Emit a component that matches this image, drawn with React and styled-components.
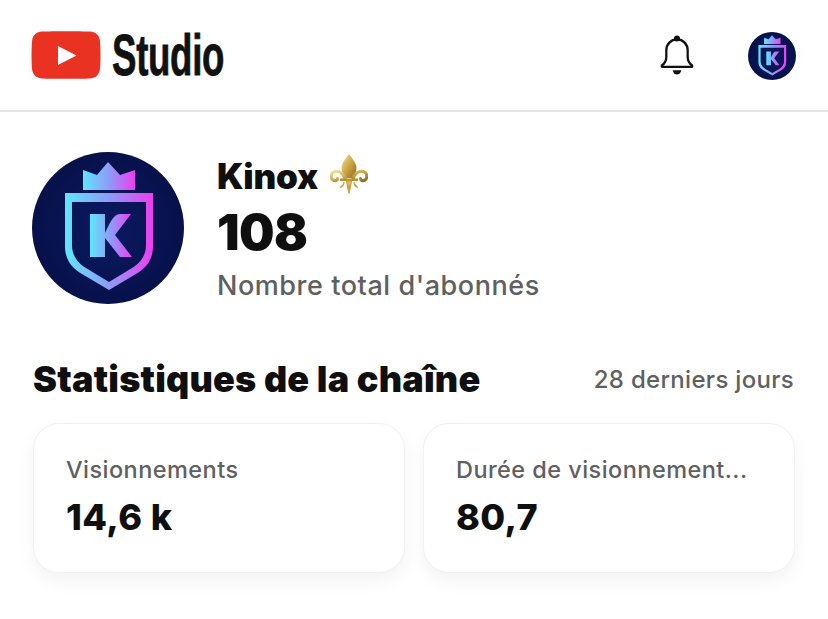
import React from 'react';
import styled, { createGlobalStyle } from 'styled-components';

const GlobalStyle = createGlobalStyle`
  html, body {
    margin: 0;
    padding: 0;
    background: #fff;
    font-family: Inter, "Liberation Sans", sans-serif;
    overflow: hidden;
  }
`;

const Page = styled.div`
  width: 828px;
  height: 619px;
  background: #fff;
`;

const Header = styled.header`
  height: 110px;
  border-bottom: 2px solid #e4e4e4;
  display: flex;
  align-items: center;
  justify-content: space-between;
  padding: 0 32px 0 31px;
`;

const Brand = styled.div`
  display: flex;
  align-items: center;
  gap: 11px;
`;

const StudioWord = styled.span`
  display: inline-block;
  width: 113px;
  font-family: "Liberation Sans", sans-serif;
  font-weight: 700;
  font-size: 58px;
  line-height: 48px;
  letter-spacing: -0.5px;
  color: #111;
  transform: scaleX(0.632);
  transform-origin: left center;
  -webkit-text-stroke: 0.8px #111;
  white-space: nowrap;
`;

const HeaderActions = styled.div`
  display: flex;
  align-items: center;
  gap: 54px;
  padding-top: 2px;
`;

const ChannelRow = styled.section`
  display: flex;
  align-items: center;
  gap: 33px;
  padding: 40px 32px 0;
`;

const ChannelInfo = styled.div`
  display: flex;
  flex-direction: column;
`;

const NameRow = styled.div`
  display: flex;
  align-items: center;
  gap: 12px;
  height: 44px;
`;

const ChannelName = styled.span`
  font-size: 35px;
  font-weight: 900;
  color: #0f0f0f;
  letter-spacing: -0.2px;
  margin-top: -2px;
`;

const FleurSlot = styled.span`
  display: inline-flex;
  margin-top: -6px;
`;

const SubCount = styled.div`
  font-size: 50px;
  line-height: 56px;
  font-weight: 900;
  color: #0f0f0f;
  margin-top: 5px;
  letter-spacing: -0.6px;
`;

const SubLabel = styled.div`
  font-size: 27px;
  line-height: 32px;
  font-weight: 500;
  color: #606060;
  margin-top: 10px;
  letter-spacing: 0.55px;
`;

const StatsHeading = styled.div`
  display: flex;
  align-items: center;
  justify-content: space-between;
  padding: 53px 34px 0 33px;
  height: 44px;
`;

const StatsTitle = styled.h2`
  margin: 0;
  font-size: 36px;
  font-weight: 900;
  color: #0f0f0f;
  letter-spacing: 0.22px;
`;

const StatsPeriod = styled.span`
  font-size: 24px;
  font-weight: 500;
  color: #606060;
  letter-spacing: 0.3px;
`;

const CardGrid = styled.div`
  display: grid;
  grid-template-columns: 372px 372px;
  gap: 18px;
  padding: 22px 0 0 33px;
`;

const Card = styled.div`
  height: 150px;
  box-sizing: border-box;
  background: #fff;
  border: 1px solid #f1f1f1;
  border-radius: 26px;
  box-shadow: 0 8px 18px rgba(0, 0, 0, 0.05);
  padding: 33px 32px 0;
  overflow: hidden;
`;

const CardLabel = styled.div`
  font-size: 23.5px;
  line-height: 28px;
  font-weight: 500;
  color: #606060;
  letter-spacing: 0.45px;
  white-space: nowrap;
  margin-top: -1px;
`;

const CardValue = styled.div`
  font-size: 36px;
  line-height: 44px;
  font-weight: 800;
  color: #0f0f0f;
  margin-top: 11px;
  letter-spacing: 0.4px;
`;

const YoutubeLogo = () => (
  <svg width="70" height="48" viewBox="0 0 70 48">
    <path
      d="M11 .6C20 0 50 0 59 .6c5.500.4 9 3.400 9.800 8.400.9 6 .9 24 0 30-.8 5-4.300 8-9.800 8.400-9 .6-39 .6-48 0C5.500 47 2 44 1.200 39 .3 33 .3 15 1.200 9 2 4 5.500 1 11 .6z"
      fill="#ea3223"
    />
    <path d="M27 15l18.500 9.500L27 34z" fill="#fff" />
  </svg>
);

const BellIcon = () => (
  <svg width="34" height="42" viewBox="0 0 36 44" fill="none">
    <circle cx="18" cy="3.500" r="3.200" fill="#111" />
    <path
      d="M2 33.500h32v-1.800c-3.600-2-4.700-4.500-4.700-9V16C29.300 9.500 24.500 4.500 18 4.500S6.700 9.500 6.700 16v6.700c0 4.500-1.100 7-4.700 9z"
      stroke="#111"
      strokeWidth="2.400"
      strokeLinejoin="round"
    />
    <path d="M13.500 37h9c-.5 3-2.300 4.500-4.500 4.500S14 40 13.500 37z" fill="#111" />
  </svg>
);

const KinoxAvatar = ({ size, id }) => (
  <svg width={size} height={size} viewBox="0 0 152 152">
    <defs>
      <linearGradient id={id}>
        <stop offset="0" stopColor="#5fe6fb" />
        <stop offset="0.5" stopColor="#8f9bf8" />
        <stop offset="1" stopColor="#ee3df0" />
      </linearGradient>
      <radialGradient id={`${id}-bg`} cx="0.5" cy="0.5" r="0.5">
        <stop offset="0" stopColor="#0a1a62" />
        <stop offset="1" stopColor="#07114a" />
      </radialGradient>
    </defs>
    <circle cx="76" cy="76" r="76" fill={`url(#${id}-bg)`} />
    <path d="M51 18l14 5L76 10l12 13 15-5v20H51z" fill={`url(#${id})`} />
    <path
      fillRule="evenodd"
      d="M33 41h88v53c0 14-7 22-17 28l-27 16-27-16c-10-6-17-14-17-28zM40 50v43c0 11 6 18 14 23l23 14 23-14c8-5 14-12 14-23V50z"
      fill={`url(#${id})`}
    />
    <path
      d="M58 62h15v19c4-8 8-19 15-19h11L83 83l17 22H88L73 86v19H58z"
      fill={`url(#${id})`}
    />
  </svg>
);

const FleurDeLis = () => (
  <svg width="38" height="40" viewBox="0 0 38 40" fill="none">
    <defs>
      <linearGradient id="gold" x1="0" y1="0" x2="1" y2="1">
        <stop offset="0" stopColor="#f5e3a0" />
        <stop offset="0.5" stopColor="#cda643" />
        <stop offset="1" stopColor="#8a6a24" />
      </linearGradient>
    </defs>
    <path
      d="M19 0c3.500 5 7.500 9 7.500 14 0 4-2.500 7-4 10h-7c-1.500-3-4-6-4-10 0-5 4-9 7.500-14z"
      fill="url(#gold)"
    />
    <path
      d="M15 25c-1-5-6-9-10.500-7.500C.5 19 .2 24 3 26c2 1.400 4.500.5 4.500-1.500M23 25c1-5 6-9 10.500-7.500 4 1.500 4.300 6.500 1.500 8.500-2 1.400-4.500.5-4.500-1.500"
      stroke="url(#gold)"
      strokeWidth="3"
      strokeLinecap="round"
    />
    <path d="M10 24.500h18v2.500H10z" fill="#b98f35" />
    <path
      d="M16.500 27h5L19 39.500zM14 28c0 3-1.500 5-4 5.500M24 28c0 3 1.500 5 4 5.500"
      fill="url(#gold)"
      stroke="#c9a13f"
      strokeWidth="1.200"
    />
  </svg>
);

const App = () => (
  <Page>
    <GlobalStyle />
    <Header>
      <Brand>
        <YoutubeLogo />
        <StudioWord>Studio</StudioWord>
      </Brand>
      <HeaderActions>
        <BellIcon />
        <KinoxAvatar size={48} id="small-k" />
      </HeaderActions>
    </Header>

    <ChannelRow>
      <KinoxAvatar size={152} id="big-k" />
      <ChannelInfo>
        <NameRow>
          <ChannelName>Kinox</ChannelName>
          <FleurSlot>
            <FleurDeLis />
          </FleurSlot>
        </NameRow>
        <SubCount>108</SubCount>
        <SubLabel>Nombre total d'abonnés</SubLabel>
      </ChannelInfo>
    </ChannelRow>

    <StatsHeading>
      <StatsTitle>Statistiques de la chaîne</StatsTitle>
      <StatsPeriod>28 derniers jours</StatsPeriod>
    </StatsHeading>

    <CardGrid>
      <Card>
        <CardLabel>Visionnements</CardLabel>
        <CardValue>14,6 k</CardValue>
      </Card>
      <Card>
        <CardLabel>Durée de visionnement...</CardLabel>
        <CardValue>80,7</CardValue>
      </Card>
    </CardGrid>
  </Page>
);

export default App;
